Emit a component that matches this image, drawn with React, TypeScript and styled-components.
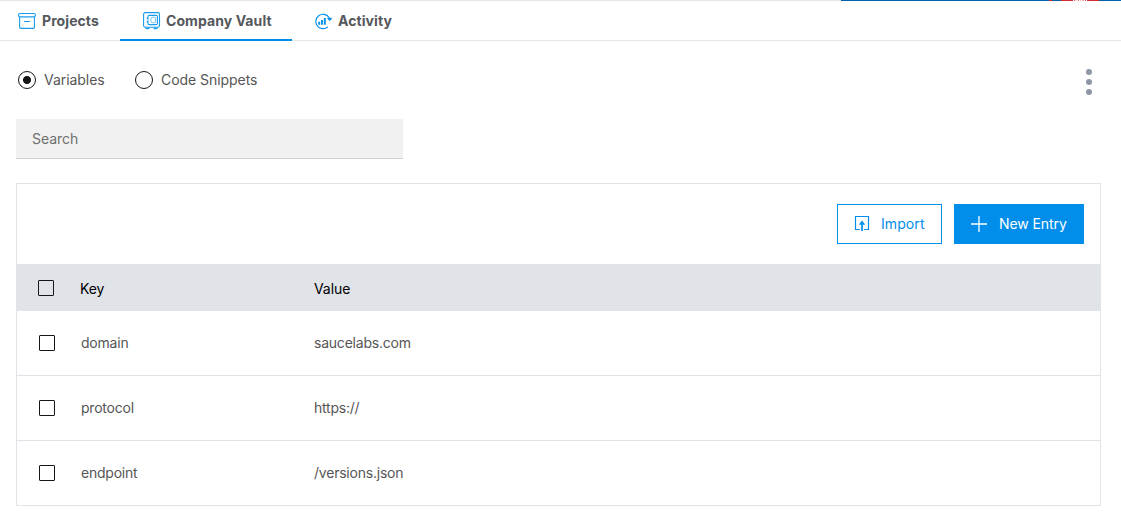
import React, { useState } from "react";
import styled, { createGlobalStyle } from "styled-components";

const GlobalStyle = createGlobalStyle`
  *, *::before, *::after { box-sizing: border-box; }
  body {
    margin: 0;
    background: #fff;
    color: #565656;
    font: 400 14px/18px Inter, "Liberation Sans", sans-serif;
    letter-spacing: -0.05px;
  }
`;

const Page = styled.div`
  height: 529px;
  overflow: hidden;
`;

const TopStrip = styled.div`
  display: flex;
  justify-content: flex-end;
  height: 1px;
  background: #e6e6e6;
`;

const Segment = styled.div<{ $width: number; $color: string }>`
  width: ${(p) => p.$width}px;
  background: ${(p) => p.$color};
`;

const TabBar = styled.nav`
  display: flex;
  height: 40px;
  box-shadow: inset 0 -1px #e6e6e6;
`;

const Tab = styled.button<{ $active?: boolean; $width: number; $inset: number }>`
  display: flex;
  align-items: center;
  gap: 5px;
  width: ${(p) => p.$width}px;
  padding: 2px 0 ${(p) => (p.$active ? 0 : 2)}px ${(p) => p.$inset}px;
  border: 0;
  border-bottom: ${(p) => (p.$active ? "2px solid #008eea" : "0")};
  background: none;
  color: #55585c;
  font: inherit;
  font-weight: 700;
  letter-spacing: 0.08px;
  white-space: nowrap;

  svg { flex: none; }
`;

const Content = styled.main`
  padding: 0 20px 0 16px;
`;

const Toolbar = styled.div`
  display: flex;
  justify-content: space-between;
  height: 78px;
  padding: 28px 9px 0 2px;
`;

const RadioGroup = styled.div`
  display: flex;
  align-items: center;
  height: 22px;
`;

const RadioOption = styled.label<{ $width?: number }>`
  display: flex;
  align-items: center;
  gap: 8px;
  width: ${(p) => (p.$width ? `${p.$width}px` : "auto")};
`;

const Radio = styled.input`
  appearance: none;
  width: 18px;
  height: 18px;
  margin: 0;
  border: 1px solid #161616;
  border-radius: 50%;
  background: #fff;

  &:checked {
    background: radial-gradient(circle, #161616 3.6px, transparent 4.4px);
  }
`;

const MoreButton = styled.button`
  display: flex;
  flex-direction: column;
  gap: 4px;
  height: 26px;
  padding: 0;
  border: 0;
  background: none;
`;

const Dot = styled.span`
  width: 6px;
  height: 6px;
  border-radius: 50%;
  background: #8d97a5;
`;

const Search = styled.input`
  display: block;
  width: 387px;
  height: 40px;
  padding: 0 16px;
  border: 0;
  border-bottom: 1px solid #d2d2d2;
  border-radius: 0;
  outline: 0;
  background: #f1f1f1;
  color: inherit;
  font: inherit;
  letter-spacing: inherit;

  &::placeholder { color: #6f6f6f; opacity: 1; }
`;

const Card = styled.section`
  margin-top: 24px;
  border: 1px solid #e0e3e8;
`;

const Actions = styled.div`
  display: flex;
  justify-content: flex-end;
  gap: 12px;
  height: 80px;
  padding: 20px 16px;
`;

const Button = styled.button<{ $primary?: boolean }>`
  display: flex;
  align-items: center;
  gap: 11px;
  width: ${(p) => (p.$primary ? 130 : 105)}px;
  height: 40px;
  padding: 0 0 0 ${(p) => (p.$primary ? 15 : 14)}px;
  border: 1px solid #008eea;
  background: ${(p) => (p.$primary ? "#008eea" : "#fff")};
  color: ${(p) => (p.$primary ? "#fff" : "#008eea")};
  font: inherit;
  letter-spacing: ${(p) => (p.$primary ? -0.08 : 0.08)}px;
  white-space: nowrap;

  svg { flex: none; }
`;

const Row = styled.div<{ $header?: boolean }>`
  display: grid;
  grid-template-columns: ${(p) => (p.$header ? "42px 234px 1fr" : "42px 233px 1fr")};
  align-items: center;
  height: ${(p) => (p.$header ? 47 : 65)}px;
  padding-left: ${(p) => (p.$header ? 21 : 22)}px;
  background: ${(p) => (p.$header ? "#e0e3e8" : "#fff")};
  color: ${(p) => (p.$header ? "#000" : "inherit")};
  font-weight: 400;
  letter-spacing: ${(p) => (p.$header ? -0.08 : -0.22)}px;
  border-bottom: ${(p) => (p.$header ? "0" : "1px solid #e0e3e8")};

  &:last-child { height: 64px; border-bottom: 0; }
`;

const Cell = styled.span<{ $drop?: boolean }>`
  padding-top: ${(p) => (p.$drop ? 2 : 0)}px;
`;

const Checkbox = styled.input`
  appearance: none;
  width: 16px;
  height: 16px;
  margin: 0;
  border: 1px solid #161616;
  border-radius: 1px;

  &:checked { background: #161616; }
`;

const BLUE = "#1a9bed";

const ProjectsIcon = () => (
  <svg width="19" height="18" viewBox="0 0 19 18" fill="none" stroke={BLUE} strokeWidth="1.1">
    <rect x=".6" y="1.5" width="16.8" height="3.4" rx="1.4" />
    <path d="M1.6 5v10.1q0 1.3 1.3 1.3h12.2q1.3 0 1.3-1.3V5M6 9.5h6" />
  </svg>
);

const VaultIcon = () => (
  <svg width="18" height="18" viewBox="0 0 18 18" fill="none" stroke={BLUE}>
    <rect x=".6" y=".6" width="15.9" height="14.6" rx="1.6" strokeWidth="1.1" />
    <path d="M5 5.2V4.6q0-1.2 1.2-1.2h7q1.2 0 1.2 1.2v6.8q0 1.2-1.2 1.2h-7q-1.2 0-1.2-1.2v-.6M5 7.2v1.6" strokeWidth="1.1" />
    <path d="M4.6 5.2v1.8M4.6 9v1.8" strokeWidth="1.7" />
    <rect x="8" y="5.3" width="4.6" height="5.4" rx="1.3" strokeWidth=".8" opacity=".75" />
    <path d="M2.7 15.3v.5q0 .8.8.8h1.9q.8 0 .8-.8v-.5M10.8 15.3v.5q0 .8.8.8h1.9q.8 0 .8-.8v-.5" strokeWidth="1.1" />
  </svg>
);

const ActivityIcon = () => (
  <svg width="18" height="18" viewBox="0 0 18 18" fill="none" stroke="#008eea">
    <path d="M14 5.4A7.2 7.2 0 1 0 12.9 14.8" strokeWidth="1.1" />
    <path d="M14.5 5.2v2M12.5 6.3l2.2 2.4 2.2-2.4Z" fill="#008eea" strokeWidth=".8" />
    <path d="M4.2 9.7v3.1M7 7.9v4.9M9.8 5.9v6.9" strokeWidth="1.9" />
  </svg>
);

const ImportIcon = () => (
  <svg width="18" height="18" viewBox="0 0 18 18" fill="none" stroke="#008eea">
    <path d="M7.8 14.5H3.5v-13h13v13h-4.3" strokeWidth="1.2" />
    <path d="M10 16V7" strokeWidth="1.7" />
    <path d="M10 5.8l2.8 3.7H7.2Z" fill="#008eea" strokeWidth=".4" />
  </svg>
);

const PlusIcon = () => (
  <svg width="18" height="18" viewBox="0 0 18 18" fill="none" stroke="#fff" strokeWidth="1.3">
    <path d="M9 1v16M1 9h16" />
  </svg>
);

const STRIP: [number, string][] = [
  [208, "#0060b0"], [3, "#d42a30"], [9, "#0060b0"], [12, "#d42a30"],
  [1, "#fff"], [1, "#dc5a60"], [3, "#fbe5e5"], [1, "#e37075"], [1, "#fff"],
  [1, "#f0b5b8"], [1, "#fff"], [2, "#eda5a8"], [1, "#fff"], [1, "#d95055"],
  [1, "#fff"], [12, "#d42a30"], [22, "#0060b0"],
];

const ENTRIES = [
  { key: "domain", value: "saucelabs.com" },
  { key: "protocol", value: "https://" },
  { key: "endpoint", value: "/versions.json" },
];

export default function App() {
  const [kind, setKind] = useState("variables");
  return (
    <Page>
      <GlobalStyle />
      <TopStrip>
        {STRIP.map(([width, color], i) => (
          <Segment key={i} $width={width} $color={color} />
        ))}
      </TopStrip>
      <TabBar>
        <Tab $width={120} $inset={18}><ProjectsIcon />Projects</Tab>
        <Tab $width={172} $inset={23} $active><VaultIcon />Company Vault</Tab>
        <Tab $width={120} $inset={23}><ActivityIcon />Activity</Tab>
      </TabBar>
      <Content>
        <Toolbar>
          <RadioGroup>
            <RadioOption $width={117}>
              <Radio type="radio" name="kind" checked={kind === "variables"} onChange={() => setKind("variables")} />
              Variables
            </RadioOption>
            <RadioOption>
              <Radio type="radio" name="kind" checked={kind === "snippets"} onChange={() => setKind("snippets")} />
              Code Snippets
            </RadioOption>
          </RadioGroup>
          <MoreButton aria-label="More">
            <Dot /><Dot /><Dot />
          </MoreButton>
        </Toolbar>
        <Search placeholder="Search" />
        <Card>
          <Actions>
            <Button><ImportIcon />Import</Button>
            <Button $primary><PlusIcon />New Entry</Button>
          </Actions>
          <Row $header>
            <Checkbox type="checkbox" />
            <Cell $drop>Key</Cell>
            <Cell $drop>Value</Cell>
          </Row>
          {ENTRIES.map((entry) => (
            <Row key={entry.key}>
              <Checkbox type="checkbox" />
              <Cell>{entry.key}</Cell>
              <Cell>{entry.value}</Cell>
            </Row>
          ))}
        </Card>
      </Content>
    </Page>
  );
}
